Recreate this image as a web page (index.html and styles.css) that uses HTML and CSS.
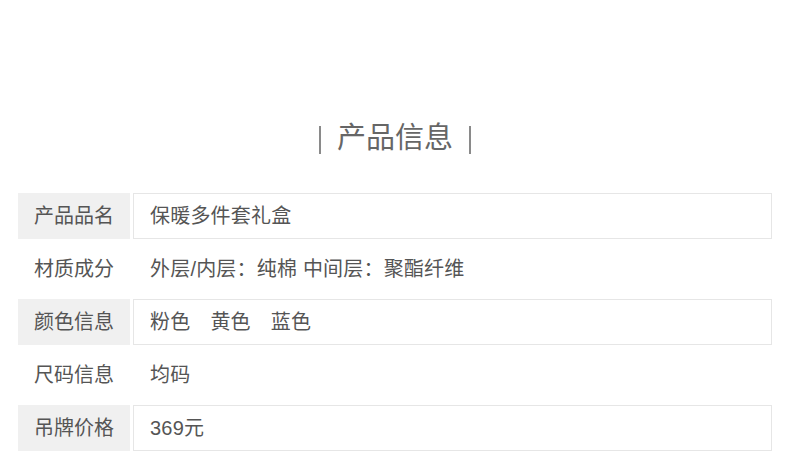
FILE: index.html
```html
<!DOCTYPE html>
<html>
	<head>
		<meta charset="UTF-8">
		<title>产品信息</title>
		<link rel="stylesheet" href="styles.css">
	</head>
	<body>
		<main>
            <h2 class="title"><span class="bar"></span>产品信息<span class="bar"></span></h2>
            <div class="info">
                <div class="row boxed">
                    <div class="label">产品品名</div>
                    <div class="value">保暖多件套礼盒</div>
                </div>
                <div class="row">
                    <div class="label">材质成分</div>
                    <div class="value">外层/内层：纯棉 中间层：聚酯纤维</div>
                </div>
                <div class="row boxed">
                    <div class="label">颜色信息</div>
                    <div class="value colors"><span>粉色</span><span>黄色</span><span>蓝色</span></div>
                </div>
                <div class="row">
                    <div class="label">尺码信息</div>
                    <div class="value">均码</div>
                </div>
                <div class="row boxed">
                    <div class="label">吊牌价格</div>
                    <div class="value">369元</div>
                </div>
            </div>
		</main>
	</body>
</html>
```

FILE: styles.css
```css
body {
    margin: 0; padding: 0;
    background: #fff;
    font-family: "Liberation Sans", "Noto Sans CJK SC", sans-serif;
    color: #555;
}

main {
    padding: 118px 18px 0;
}

.title {
    margin: 0 0 35px;
    height: 40px;
    line-height: 40px;
    font-size: 29px;
    font-weight: normal;
    color: #666;
    text-align: center;
    display: flex;
    justify-content: center;
    align-items: center;
    gap: 16px;
}

.title .bar {
    width: 2px;
    height: 28px;
    background: #8a8a8a;
    margin-top: 4px;
}

.info {
    display: flex;
    flex-direction: column;
    gap: 7px;
    width: 754px;
}

.row {
    display: flex;
    gap: 3px;
    height: 46px;
}

.label {
    width: 112px;
    flex: none;
    display: flex;
    align-items: center;
    justify-content: center;
    padding-bottom: 3px;
    box-sizing: border-box;
    font-size: 20px;
}

.value {
    flex: 1;
    display: flex;
    align-items: center;
    padding: 0 0 3px 17px;
    font-size: 20px;
    letter-spacing: 0.2px;
    box-sizing: border-box;
}

.row.boxed .label {
    background: #f0f0f0;
}

.row.boxed .value {
    border: 1px solid #e6e6e6;
    padding-left: 16px;
}

.colors span {
    margin-right: 20px;
}
```
